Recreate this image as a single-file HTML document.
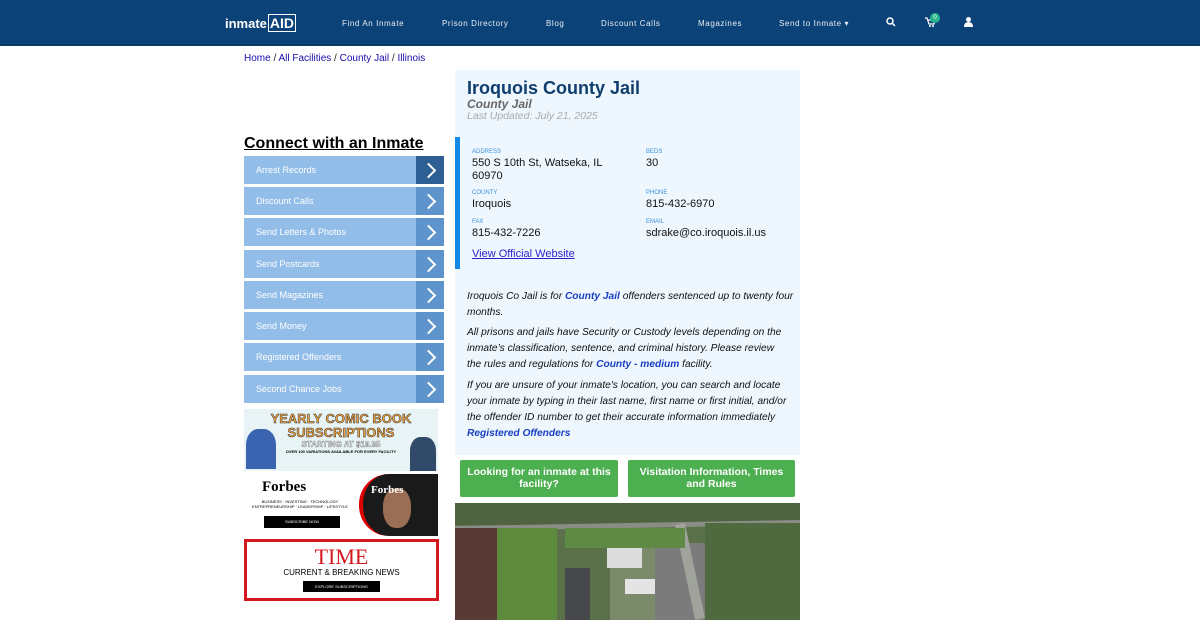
<!DOCTYPE html>
<html><head><meta charset="utf-8"><style>
*{box-sizing:border-box;margin:0;padding:0}
body{width:1200px;height:620px;overflow:hidden;background:#fff;font-family:"Liberation Sans",sans-serif;position:relative}
.nav{position:absolute;left:0;top:0;width:1200px;height:46px;background:#0b4277;border-bottom:2px solid #0a3a68}
.nav .it{position:absolute;top:19px;color:#e8eef5;font-size:8px;letter-spacing:.6px}
.logo{position:absolute;left:225px;top:15px;color:#fff;font-size:13px;font-weight:bold}
.logo b{font-size:14px;border:1px solid #fff;padding:0 1px;margin-left:1px}
.bc{position:absolute;left:244px;top:53px;font-size:10px;color:#222}
.bc a{color:#1a0dab;text-decoration:none}
h2{position:absolute;left:244px;top:135px;font-size:16px;font-weight:bold;text-decoration:underline;color:#000}
.btn{position:absolute;left:244px;width:200px;height:28px;background:#91bde8;color:#fff;font-size:9px;line-height:28px;padding-left:12px}
.btn i{position:absolute;right:0;top:0;width:28px;height:28px;background:#5f93cc}
.btn i:after{content:"";position:absolute;left:7px;top:9px;width:9px;height:9px;border-top:2px solid #fff;border-right:2px solid #fff;transform:rotate(45deg)}
.card{position:absolute;left:455px;top:70px;width:345px;height:385px;background:#eef7fd}
.lbl{position:absolute;font-size:6px;color:#3d8fdc}
.val{position:absolute;font-size:11px;color:#111;line-height:13px}
.p{position:absolute;left:467px;width:328px;font-size:10.2px;font-style:italic;line-height:16px;color:#111}
.p b{color:#1a3fc4;font-style:italic}
.g{position:absolute;top:460px;height:37px;background:#4caf50;color:#fff;font-weight:bold;font-size:10.5px;text-align:center;line-height:12px;padding:6px 2px 0;border-radius:2px}
</style></head><body>
<div class="nav">
<div class="logo">inmate<b>AID</b></div>
<div class="it" style="left:342px">Find An Inmate</div>
<div class="it" style="left:442px">Prison Directory</div>
<div class="it" style="left:546px">Blog</div>
<div class="it" style="left:601px">Discount Calls</div>
<div class="it" style="left:698px">Magazines</div>
<div class="it" style="left:779px">Send to Inmate ▾</div>
<svg style="position:absolute;left:886px;top:17px" width="10" height="10"><circle cx="4" cy="4" r="3" stroke="#fff" stroke-width="1.5" fill="none"/><path d="M6 6 9 9" stroke="#fff" stroke-width="1.5"/></svg>
<svg style="position:absolute;left:925px;top:17px" width="10" height="10"><path d="M0 1h2l2 6h5l1-4H3" stroke="#fff" fill="none" stroke-width="1.2"/><circle cx="5" cy="9" r="1" fill="#fff"/><circle cx="8" cy="9" r="1" fill="#fff"/></svg>
<div style="position:absolute;left:930px;top:13px;width:10px;height:10px;border-radius:5px;background:#28b48c;color:#fff;font-size:6px;text-align:center;line-height:10px">0</div>
<svg style="position:absolute;left:964px;top:17px" width="9" height="10"><circle cx="4.5" cy="2.5" r="2.5" fill="#fff"/><path d="M0 10 Q0 5 4.5 5 Q9 5 9 10Z" fill="#fff"/></svg>
</div>
<div class="bc"><a>Home</a> / <a>All Facilities</a> / <a>County Jail</a> / <a>Illinois</a></div>
<h2>Connect with an Inmate</h2>
<div class="btn" style="top:156px">Arrest Records<i style="background:#2e5f94"></i></div>
<div class="btn" style="top:187px">Discount Calls<i></i></div>
<div class="btn" style="top:218px">Send Letters &amp; Photos<i></i></div>
<div class="btn" style="top:250px">Send Postcards<i></i></div>
<div class="btn" style="top:281px">Send Magazines<i></i></div>
<div class="btn" style="top:312px">Send Money<i></i></div>
<div class="btn" style="top:343px">Registered Offenders<i></i></div>
<div class="btn" style="top:375px">Second Chance Jobs<i></i></div>
<div style="position:absolute;left:244px;top:409px;width:194px;height:62px;background:#e8f3f5;text-align:center">
<div style="font-size:13px;font-weight:bold;color:#f2a23c;margin-top:3px;line-height:14px;-webkit-text-stroke:.5px #333">YEARLY COMIC BOOK<br>SUBSCRIPTIONS</div>
<div style="font-size:8px;color:#fff;-webkit-text-stroke:.3px #333;font-weight:bold">STARTING AT $19.95</div>
<div style="font-size:4px;font-weight:bold">OVER 100 VARIATIONS AVAILABLE FOR EVERY FACILITY</div>
<div style="position:absolute;left:2px;top:20px;width:30px;height:40px;background:#3a64b0;border-radius:40% 40% 0 0"></div>
<div style="position:absolute;right:2px;top:28px;width:26px;height:34px;background:#324a6a;border-radius:40% 40% 0 0"></div>
</div>
<div style="position:absolute;left:244px;top:474px;width:194px;height:62px;background:#fff">
<div style="position:absolute;left:18px;top:5px;font-family:'Liberation Serif',serif;font-weight:bold;font-size:15px">Forbes</div>
<div style="position:absolute;left:6px;top:25px;font-size:4px;width:100px;text-align:center">BUSINESS · INVESTING · TECHNOLOGY<br>ENTREPRENEURSHIP · LEADERSHIP · LIFESTYLE</div>
<div style="position:absolute;left:20px;top:42px;width:76px;height:12px;background:#000;color:#fff;font-size:4px;text-align:center;line-height:12px">SUBSCRIBE NOW</div>
<div style="position:absolute;left:115px;top:0;width:79px;height:62px;background:#1a1a1a;border-left:4px solid #d00;border-radius:30px 0 0 30px"><div style="position:absolute;left:20px;top:14px;width:28px;height:40px;background:#9a6e55;border-radius:45%"></div><div style="position:absolute;left:8px;top:10px;color:#fff;font-family:'Liberation Serif',serif;font-size:11px;font-weight:bold">Forbes</div></div>
</div>
<div style="position:absolute;left:244px;top:539px;width:195px;height:62px;border:3px solid #d4181f;text-align:center">
<div style="font-family:'Liberation Serif',serif;font-size:22px;color:#d4181f;line-height:22px;margin-top:4px">TIME</div>
<div style="font-size:8px;line-height:10px">CURRENT &amp; BREAKING NEWS</div>
<div style="margin:3px auto 0;width:77px;height:11px;background:#000;color:#fff;font-size:4px;line-height:11px">EXPLORE SUBSCRIPTIONS</div>
</div>
<div class="card"></div>
<div style="position:absolute;left:467px;top:78px;font-size:18px;font-weight:bold;color:#0f3d6e">Iroquois County Jail</div>
<div style="position:absolute;left:467px;top:97px;font-size:12px;font-weight:bold;font-style:italic;color:#666">County Jail</div>
<div style="position:absolute;left:467px;top:110px;font-size:10.5px;font-style:italic;color:#aaa">Last Updated: July 21, 2025</div>
<div style="position:absolute;left:455px;top:137px;width:5px;height:132px;background:#1689e6"></div>
<div class="lbl" style="left:472px;top:149px">ADDRESS</div><div class="val" style="left:472px;top:157px">550 S 10th St, Watseka, IL<br>60970</div>
<div class="lbl" style="left:646px;top:149px">BEDS</div><div class="val" style="left:646px;top:157px">30</div>
<div class="lbl" style="left:472px;top:190px">COUNTY</div><div class="val" style="left:472px;top:198px">Iroquois</div>
<div class="lbl" style="left:646px;top:190px">PHONE</div><div class="val" style="left:646px;top:198px">815-432-6970</div>
<div class="lbl" style="left:472px;top:219px">FAX</div><div class="val" style="left:472px;top:227px">815-432-7226</div>
<div class="lbl" style="left:646px;top:219px">EMAIL</div><div class="val" style="left:646px;top:227px">sdrake@co.iroquois.il.us</div>
<div class="val" style="left:472px;top:248px;color:#2a1ed0;text-decoration:underline">View Official Website</div>
<div class="p" style="top:289px">Iroquois Co Jail is for <b>County Jail</b> offenders sentenced up to twenty four months.</div>
<div class="p" style="top:325px;width:322px">All prisons and jails have Security or Custody levels depending on the inmate’s classification, sentence, and criminal history. Please review the rules and regulations for <b>County - medium</b> facility.</div>
<div class="p" style="top:378px;width:322px">If you are unsure of your inmate's location, you can search and locate your inmate by typing in their last name, first name or first initial, and/or the offender ID number to get their accurate information immediately <b>Registered Offenders</b></div>
<div class="g" style="left:460px;width:158px">Looking for an inmate at this facility?</div>
<div class="g" style="left:628px;width:167px;padding:6px 10px 0">Visitation Information, Times and Rules</div>
<div style="position:absolute;left:455px;top:503px;width:345px;height:117px;background:#5a7048;overflow:hidden">
<div style="position:absolute;left:0;top:0;width:345px;height:22px;background:#4f6340"></div>
<div style="position:absolute;left:0;top:20px;width:345px;height:5px;background:#8a8d86;transform:rotate(-1deg)"></div>
<div style="position:absolute;left:0;top:25px;width:42px;height:92px;background:#5a3a34"></div>
<div style="position:absolute;left:42px;top:25px;width:60px;height:92px;background:#5e8a3e"></div>
<div style="position:absolute;left:110px;top:65px;width:25px;height:52px;background:#45474a"></div>
<div style="position:absolute;left:155px;top:40px;width:75px;height:80px;background:#7b8a6a"></div>
<div style="position:absolute;left:152px;top:40px;width:35px;height:25px;background:#dcdcdc"></div>
<div style="position:absolute;left:170px;top:76px;width:30px;height:15px;background:#e4e4e4"></div>
<div style="position:absolute;left:200px;top:40px;width:50px;height:77px;background:#7a7b7a"></div>
<div style="position:absolute;left:230px;top:20px;width:10px;height:97px;background:#a0a29c;transform:rotate(-12deg)"></div>
<div style="position:absolute;left:250px;top:20px;width:95px;height:97px;background:#4f6a3e"></div>
<div style="position:absolute;left:110px;top:25px;width:120px;height:20px;background:#5e8a45"></div>
</div>
</body></html>
